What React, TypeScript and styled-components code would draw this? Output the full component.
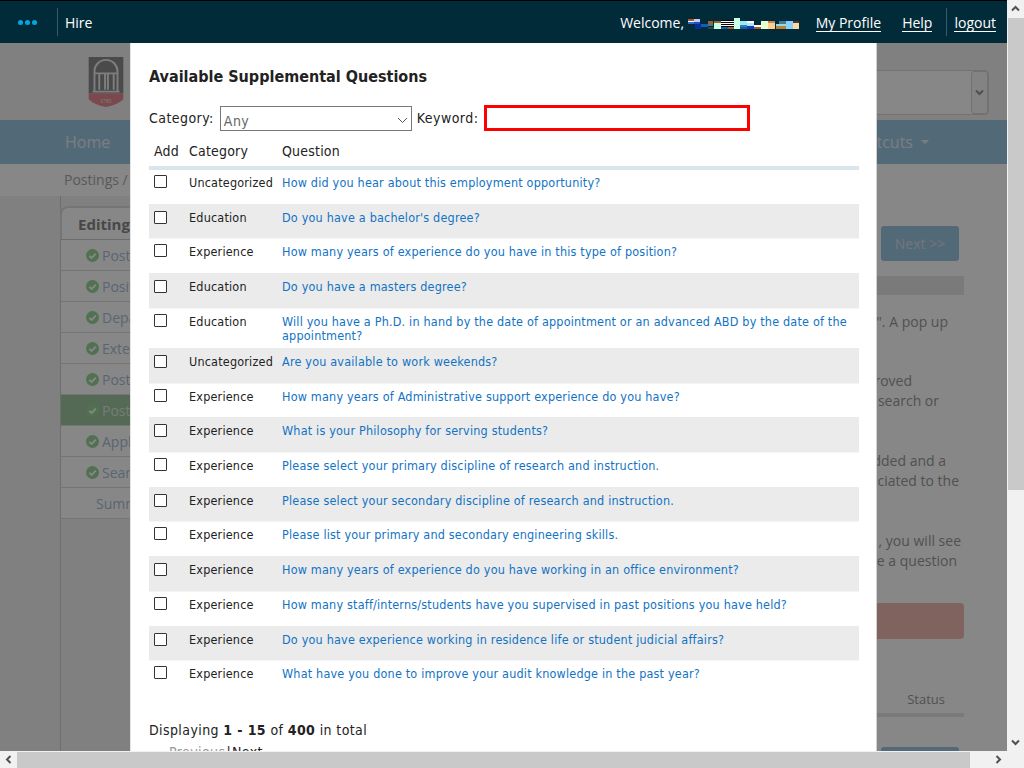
import React from "react";
import styled, { createGlobalStyle } from "styled-components";

const Global = createGlobalStyle`
  html, body { margin: 0; padding: 0; height: 100%; overflow: hidden; background: #fff; }
  #root { height: 100%; }
  * { box-sizing: border-box; }
`;

const Shell = styled.div`
  width: 1024px; height: 768px; display: grid;
  grid-template-columns: 1007px 17px; grid-template-rows: 751px 17px;
  overflow: hidden; font-family: "Open Sans", "Noto Sans", sans-serif;
`;
const Viewport = styled.div`position: relative; overflow: hidden; background: #fff; display: flex; flex-direction: column;`;

/* scrollbars */
const VBar = styled.div`background: #f1f1f1; display: flex; flex-direction: column; align-items: stretch;`;
const HBar = styled.div`background: #f1f1f1; display: flex; align-items: stretch;`;
const Corner = styled.div`background: #f1f1f1;`;
const Arrow = styled.div`width: 17px; height: 17px; flex: none; display: flex; align-items: center; justify-content: center;`;
const VThumb = styled.div`height: 472px; background: #c9c9c9; margin-top: 1px; margin-left: 1px;`;
const HThumb = styled.div`width: 953px; background: #c9c9c9; margin-top: 1px;`;
const Spacer = styled.div`flex: 1;`;

/* top bar */
const TopBar = styled.header`
  height: 43px; flex: none; background: #022b3a; border-top: 1px solid #000; display: flex; align-items: center;
  color: #fff; font-size: 14px; position: relative; z-index: 3; padding-left: 18px; padding-right: 11px;
`;
const Dots = styled.div`display: flex; gap: 2px; width: 39px;`;
const Dot = styled.span`width: 5px; height: 5px; border-radius: 50%; background: #00a8e0;`;
const VRule = styled.span<{ $ml?: number }>`width: 1px; height: 28px; background: #3b5a68; flex: none; margin-left: ${p => p.$ml ?? 0}px;`;
const AppName = styled.span`margin-left: 7px;`;
const Welcome = styled.span`margin-left: auto; margin-right: 4px;`;
const TopLink = styled.a<{ $ml: number }>`
  margin-left: ${p => p.$ml}px; color: #fff; text-decoration: none; border-bottom: 1px solid #fff; line-height: 17px; padding-top: 1px;
`;

/* blocks behind the dialog */
const Masthead = styled.div`height: 77px; flex: none; display: flex; align-items: center; padding-left: 88px; padding-right: 18px; background: #f1f1f1; justify-content: space-between;`;
const SearchBox = styled.div`width: 300px; height: 45px; border: 1px solid #d8d8d8; background: #fff; border-radius: 4px; display: flex; justify-content: flex-end; margin-top: 21px;`;
const SearchBtn = styled.div`width: 17px; border: 1px solid #bbb; border-radius: 3px; display: flex; align-items: center; justify-content: center; background: #f2f2f2; opacity: .6;`;
const NavBar = styled.nav`height: 44px; flex: none; background: #9cc6e2; display: flex; align-items: center; justify-content: space-between; padding: 0 78px 0 65px; color: #e8eef2; font-size: 16px;`;
const NavEnd = styled.span`display: flex; align-items: center; gap: 8px;`;
const Caret = styled.span`width: 0; height: 0; border-left: 4px solid transparent; border-right: 4px solid transparent; border-top: 4px solid #e8eef2;`;
const Crumb = styled.div`height: 32px; flex: none; padding: 6px 0 0 64px; font-size: 14px; color: #a8a8a8; background: #fff;`;
const Body = styled.div`flex: 1; display: flex; background: #f1f1f1; min-height: 0;`;
const Sidebar = styled.aside`width: 140px; margin-left: 60px; flex: none; border-left: 1px solid #d0d0d0; padding-top: 10px; font-size: 14px; color: #a9bfd6;`;
const SideTab = styled.div`height: 34px; border: 2px solid #ddd; border-bottom: 1px solid #ccc; border-radius: 8px 8px 0 0; margin-left: -1px; background: #fff; padding: 6px 0 0 16px; font-weight: 700; font-size: 15px; color: #888;`;
const SideRow = styled.div<{ $active?: boolean }>`
  height: 31px; display: flex; align-items: center; gap: 3px; padding-left: 25px; border-bottom: 1px solid #ddd;
  background: ${p => (p.$active ? "#a0c8a0" : "#fff")}; color: ${p => (p.$active ? "#e0e8e0" : "#a9bfd6")};
`;
const SideIndent = styled(SideRow)`padding-left: 35px;`;
const Main = styled.main`flex: 1; background: #fff; padding: 30px 43px 0 0; display: flex; flex-direction: column; align-items: flex-end; color: #999; font-size: 14px;`;
const NextBtn = styled.div`width: 78px; height: 35px; background: #9cc6e2; border-radius: 3px; color: #dde; display: flex; align-items: center; justify-content: center; flex: none; margin-right: 5px;`;
const GreyBar = styled.div`width: 120px; height: 19px; background: #e6e6e6; margin-top: 15px; flex: none;`;
const Para = styled.div`width: 100%; display: flex; flex-direction: column; align-items: flex-end;`;
const PLine = styled.div<{ $pr: number; $mt?: number }>`height: 20px; line-height: 20px; padding-right: ${p => p.$pr}px; margin-top: ${p => p.$mt ?? 0}px;`;
const Alert = styled.div`width: 120px; height: 36px; background: #f1bbb3; border-radius: 4px; margin-top: 32px; flex: none;`;
const Status = styled.div`padding-right: 19px; margin-top: 53px; font-size: 13px; height: 15px; line-height: 15px; flex: none;`;
const StatusRule = styled.div`width: 120px; height: 4px; background: #e6e6e6; margin-top: 6px; flex: none;`;
const SmallBtn = styled(NextBtn)`margin-top: 30px;`;

const Overlay = styled.div`position: absolute; left: 0; right: 0; top: 43px; bottom: 0; background: rgba(0,0,0,.47); backdrop-filter: blur(.7px); z-index: 1;`;

/* dialog */
const Modal = styled.section`
  position: absolute; left: 130px; top: 43px; width: 747px; height: 800px; z-index: 2;
  background: #fff; border-left: 1px solid #e4e4e4; border-right: 1px solid #d0d0d0; padding: 24px 17px 0 18px;
  font-family: "DejaVu Sans Condensed", "DejaVu Sans", sans-serif; font-stretch: condensed; color: #222; font-size: 12px;
`;
const Title = styled.h2`margin: 0; font-size: 16px; line-height: 20px; font-weight: 700;`;
const Filters = styled.div`display: flex; align-items: center; margin-top: 18px; height: 26px; font-size: 14px; letter-spacing: .45px;`;
const Select = styled.div`
  width: 192px; height: 25px; border: 1px solid #777; margin-left: 6px; margin-right: 5px; margin-top: 1px; display: flex; align-items: center;
  justify-content: space-between; padding: 4px 3px 0 3px; color: #666; font-size: 14px;
`;
const KeywordInput = styled.input`width: 266px; height: 26px; border: 3px solid #f00; margin-left: 6px; margin-top: 0; outline: none; background: #fff; padding: 0;`;
const QTable = styled.table`width: 710px; border-collapse: separate; border-spacing: 0; table-layout: fixed; margin-top: 6px;`;
const Th = styled.th<{ $w: number }>`
  width: ${p => p.$w}px; text-align: left; font-weight: 400; font-size: 14px; letter-spacing: .2px; padding: 5px 0 5px 5px; height: 29px; line-height: 19px;
  border-bottom: 4px solid #d9e5ea;
`;
const Td = styled.td`padding: 6px 0 0 5px; vertical-align: top; line-height: 14px; font-size: 12.5px; letter-spacing: .19px;`;
const CheckTd = styled(Td)`padding-top: 5px;`;
const Row = styled.tr<{ $tall?: boolean }>`
  height: ${p => (p.$tall ? 39.3 : 33.7)}px;
  &:nth-child(even) {
    height: 35.7px;
    background: #ebebeb;
    box-shadow: inset 0 -1px 0 #f5f5f5;
    ${Td} { padding-top: 7px; }
  }
`;
const Check = styled.input`appearance: none; display: block; width: 13px; height: 13px; margin: 0; border: 1px solid #333; background: #fff; border-radius: 1px;`;
const QLink = styled.a`color: #1273c4; text-decoration: none;`;
const Total = styled.div`margin-top: 26px; font-size: 14px; line-height: 19px; letter-spacing: .4px;`;
const Pager = styled.div`margin-top: 3px; padding-left: 20px; font-size: 14px; line-height: 19px; letter-spacing: .4px;`;
const PagerOff = styled.span`color: #999;`;
const PagerOn = styled.span`color: #222;`;
const PagerSep = styled.span`margin: 0 1px;`;

const Q: [string, string, boolean?][] = [
  ["Uncategorized", "How did you hear about this employment opportunity?"],
  ["Education", "Do you have a bachelor's degree?"],
  ["Experience", "How many years of experience do you have in this type of position?"],
  ["Education", "Do you have a masters degree?"],
  ["Education", "Will you have a Ph.D. in hand by the date of appointment or an advanced ABD by the date of the appointment?", true],
  ["Uncategorized", "Are you available to work weekends?"],
  ["Experience", "How many years of Administrative support experience do you have?"],
  ["Experience", "What is your Philosophy for serving students?"],
  ["Experience", "Please select your primary discipline of research and instruction."],
  ["Experience", "Please select your secondary discipline of research and instruction."],
  ["Experience", "Please list your primary and secondary engineering skills."],
  ["Experience", "How many years of experience do you have working in an office environment?"],
  ["Experience", "How many staff/interns/students have you supervised in past positions you have held?"],
  ["Experience", "Do you have experience working in residence life or student judicial affairs?"],
  ["Experience", "What have you done to improve your audit knowledge in the past year?"],
];

const Chevron = ({ dir }: { dir: "u" | "d" | "l" | "r" }) => {
  const rot = { u: 0, r: 90, d: 180, l: 270 }[dir];
  return (
    <svg width="9" height="7" viewBox="0 0 9 7" style={{ transform: `rotate(${rot}deg)` }}>
      <path d="M1 5.5 L4.5 2 L8 5.5" fill="none" stroke="#505050" strokeWidth="2" />
    </svg>
  );
};

const Tick = () => (
  <svg width="13" height="13" viewBox="0 0 13 13" style={{ flex: "none" }}>
    <circle cx="6.5" cy="6.5" r="6.5" fill="#9ad69a" />
    <path d="M3.3 6.8 L5.6 9 L9.8 4.6" fill="none" stroke="#fff" strokeWidth="1.8" />
  </svg>
);

const Crest = () => (
  <svg width="36" height="50" viewBox="0 0 36 52">
    <rect x="0" y="0" width="36" height="38" fill="#8c8c8c" />
    <path d="M0 38H36V44Q30 50 18 52Q6 50 0 44Z" fill="#e88a92" />
    <path d="M6 36V15A12 12 0 0 1 30 15V36" fill="none" stroke="#eee" strokeWidth="2" />
    <path d="M6 17H30M11 17V34M17 17V34M20 17V34M26 17V34M4 36H32" fill="none" stroke="#eee" strokeWidth="2" />
    <text x="18" y="47.5" fontSize="6" textAnchor="middle" fill="#eee" fontFamily="Liberation Serif, serif">1785</text>
  </svg>
);

const pixels = [
  [0,1,6,2,"#a85a28"],[0,3,6,1,"#fff"],[0,4,6,2,"#2a6fd0"],[6,1,6,3,"#c8c8f0"],[6,4,6,2,"#1a50c0"],[7,6,6,5,"#0a2a9a"],
  [13,6,7,3,"#0a60c0"],[20,3,5,3,"#a06030"],[20,6,5,2,"#4a7a8a"],[20,9,6,2,"#2a4a3a"],[26,3,7,2,"#a06030"],[26,5,7,6,"#c8ffe0"],
  [33,2,13,9,"#000"],[33,3,13,1,"#fff"],[33,5,13,1,"#fff"],[33,7,13,1,"#fff"],[33,9,7,2,"#1a60a0"],[40,9,6,2,"#a06030"],
  [46,0,6,11,"#c8ffe0"],[52,3,7,4,"#a0e8f8"],[52,7,7,2,"#2a80c0"],[52,9,7,2,"#1a60a0"],[59,1,7,2,"#123"],[59,3,7,2,"#fff"],[59,5,7,3,"#a8e8f8"],[59,8,7,3,"#1a3ab0"],
  [66,7,7,2,"#fff"],[66,9,7,2,"#a06030"],[73,3,7,8,"#e8ffd0"],[80,3,7,2,"#c08a50"],[80,5,7,6,"#ffd090"],[91,3,7,3,"#4a7a8a"],
  [88,6,10,2,"#8adcf0"],[88,8,10,3,"#c08030"],[98,3,7,8,"#8ad0ff"],[105,3,6,2,"#4a3a30"],[105,5,6,6,"#ffd8a0"],
] as [number, number, number, number, string][];

const Redacted = () => (
  <svg width="111" height="12" viewBox="0 0 111 12" style={{ verticalAlign: "-2px" }}>
    {pixels.map(([x, y, w, h, f], i) => <rect key={i} x={x} y={y} width={w} height={h} fill={f} />)}
  </svg>
);

export default function App() {
  return (
    <>
      <Global />
      <Shell>
        <Viewport>
          <TopBar>
            <Dots><Dot /><Dot /><Dot /></Dots>
            <VRule />
            <AppName>Hire</AppName>
            <Welcome>Welcome, <Redacted /></Welcome>
            <TopLink $ml={13} href="#">My Profile</TopLink>
            <TopLink $ml={21} href="#">Help</TopLink>
            <VRule $ml={14} />
            <TopLink $ml={7} href="#">logout</TopLink>
          </TopBar>
          <Masthead>
            <Crest />
            <SearchBox><SearchBtn><Chevron dir="d" /></SearchBtn></SearchBox>
          </Masthead>
          <NavBar>
            <span>Home</span>
            <NavEnd>Shortcuts <Caret /></NavEnd>
          </NavBar>
          <Crumb>Postings /</Crumb>
          <Body>
            <Sidebar>
              <SideTab>Editing</SideTab>
              {["Posting", "Position", "Department", "External", "Posting", "Posting", "Applicant", "Search"].map((t, i) => (
                <SideRow key={i} $active={i === 5}><Tick />{t}</SideRow>
              ))}
              <SideIndent>Summary</SideIndent>
            </Sidebar>
            <Main>
              <NextBtn>Next &gt;&gt;</NextBtn>
              <GreyBar />
              <Para>
                <PLine $pr={16} $mt={17}>". A pop up</PLine>
                <PLine $pr={52} $mt={39}>roved</PLine>
                <PLine $pr={25}>search or</PLine>
                <PLine $pr={18} $mt={40}>dded and a</PLine>
                <PLine $pr={5}>ciated to the</PLine>
                <PLine $pr={3} $mt={40}>, you will see</PLine>
                <PLine $pr={7}>e a question</PLine>
              </Para>
              <Alert />
              <Status>Status</Status>
              <StatusRule />
              <SmallBtn />
            </Main>
          </Body>
          <Overlay />
          <Modal>
            <Title>Available Supplemental Questions</Title>
            <Filters>
              Category:
              <Select>
                Any
                <svg width="11" height="7" viewBox="0 0 11 7"><path d="M1 1 L5.5 5.5 L10 1" fill="none" stroke="#555" /></svg>
              </Select>
              Keyword:
              <KeywordInput />
            </Filters>
            <QTable>
              <thead>
                <tr>
                  <Th $w={35}>Add</Th>
                  <Th $w={93}>Category</Th>
                  <Th $w={582}>Question</Th>
                </tr>
              </thead>
              <tbody>
                {Q.map(([c, q, tall], i) => (
                  <Row key={i} $tall={tall}>
                    <CheckTd><Check type="checkbox" /></CheckTd>
                    <Td>{c}</Td>
                    <Td><QLink href="#">{q}</QLink></Td>
                  </Row>
                ))}
              </tbody>
            </QTable>
            <Total>Displaying <b>1 - 15</b> of <b>400</b> in total</Total>
            <Pager><PagerOff>Previous</PagerOff><PagerSep>|</PagerSep><PagerOn>Next</PagerOn></Pager>
          </Modal>
        </Viewport>
        <VBar>
          <Arrow><Chevron dir="u" /></Arrow>
          <VThumb />
          <Spacer />
          <Arrow><Chevron dir="d" /></Arrow>
        </VBar>
        <HBar>
          <Arrow><Chevron dir="l" /></Arrow>
          <HThumb />
          <Spacer />
          <Arrow><Chevron dir="r" /></Arrow>
        </HBar>
        <Corner />
      </Shell>
    </>
  );
}
